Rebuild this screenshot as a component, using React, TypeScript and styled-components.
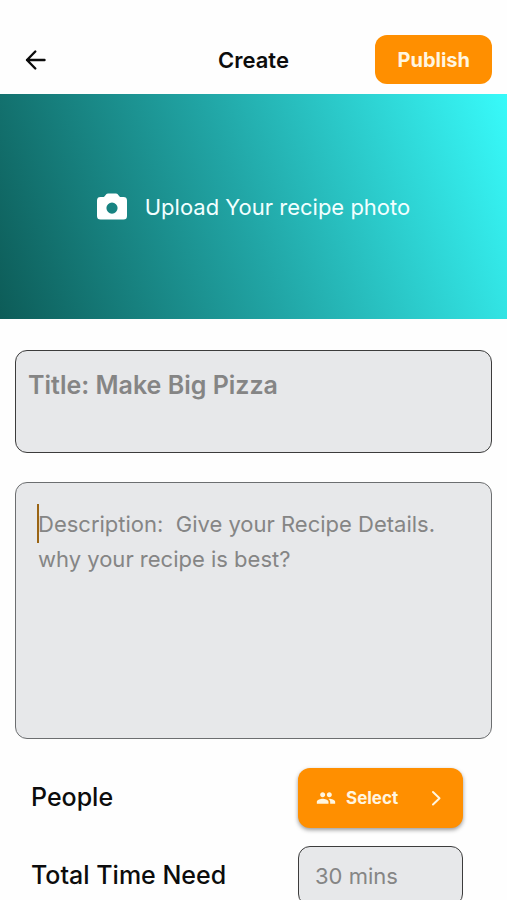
import React from "react";
import styled, { createGlobalStyle } from "styled-components";
import { MdPeople } from "react-icons/md";

const GlobalStyle = createGlobalStyle`
  *, *::before, *::after { box-sizing: border-box; }
  body {
    margin: 0;
    background: #fefefe;
    color: #0c0c0c;
    font-family: Inter, Roboto, "Liberation Sans", sans-serif;
  }
  button, input, textarea { font: inherit; color: inherit; }
`;

const Header = styled.header`
  display: grid;
  grid-template-columns: 1fr auto 1fr;
  align-items: center;
  padding: 35px 15px 10px;
`;

const BackButton = styled.button`
  display: flex;
  justify-self: start;
  padding: 0 8px;
  border: 0;
  background: none;
  cursor: pointer;
`;

const Title = styled.h1`
  margin: 0;
  font-size: 22px;
  font-weight: 600;
  line-height: 28px;
`;

const PublishButton = styled.button`
  justify-self: end;
  height: 49px;
  padding: 0 22px;
  border: 0;
  border-radius: 12px;
  background: #ff8f00;
  color: #fff6e0;
  font-size: 20px;
  font-weight: 700;
  cursor: pointer;
`;

const UploadBanner = styled.button`
  display: flex;
  align-items: center;
  justify-content: center;
  gap: 18px;
  width: 100%;
  height: 225px;
  padding: 0;
  border: 0;
  background: linear-gradient(70deg, #0d5c58 0%, #21a5a5 48%, #38fafa 100%);
  color: #f2ffff;
  font-size: 22px;
  cursor: pointer;
`;

const Form = styled.form`
  display: flex;
  flex-direction: column;
  gap: 29px;
  padding: 31px 15px 24px;
`;

const Field = styled.div`
  position: relative;
  display: flex;
`;

const TextArea = styled.textarea<{ $variant: "title" | "description" }>`
  width: 100%;
  height: ${(p) => (p.$variant === "title" ? 103 : 257)}px;
  padding: ${(p) => (p.$variant === "title" ? "17px 12px" : "24px 22px")};
  border: 1px solid ${(p) => (p.$variant === "title" ? "#3c3c3c" : "#6c6e70")};
  border-radius: 12px;
  outline: 0;
  resize: none;
  background: #e7e8ea;
  font-size: ${(p) => (p.$variant === "title" ? 25 : 22)}px;
  font-weight: ${(p) => (p.$variant === "title" ? 600 : 400)};
  line-height: 35px;
  &::placeholder { color: #858585; opacity: 1; }
`;

const Caret = styled.span`
  position: absolute;
  top: 22px;
  left: 22px;
  width: 2px;
  height: 39px;
  background: #9a6414;
`;

const Options = styled.div`
  display: flex;
  flex-direction: column;
  gap: 18px;
  padding: 0 29px 0 16px;
`;

const OptionRow = styled.div`
  display: flex;
  align-items: center;
  justify-content: space-between;
`;

const Label = styled.label`
  padding-bottom: 3px;
  font-size: 25px;
  font-weight: 500;
  line-height: 28px;
`;

const SelectButton = styled.button`
  display: flex;
  align-items: center;
  gap: 10px;
  width: 165px;
  height: 60px;
  padding: 0 18px;
  border: 0;
  border-radius: 12px;
  background: #ff8f00;
  box-shadow: 0 2px 4px rgba(0, 0, 0, 0.4);
  color: #fff6e0;
  font-size: 17px;
  font-weight: 700;
  cursor: pointer;
  svg:last-child { margin-left: auto; }
`;

const TimeInput = styled.input`
  width: 165px;
  height: 60px;
  padding: 0 16px;
  border: 1px solid #3c3c3c;
  border-radius: 12px;
  outline: 0;
  background: #e7e8ea;
  font-size: 22px;
  &::placeholder { color: #858585; opacity: 1; }
`;

const ArrowLeft = () => (
  <svg width="24" height="24" viewBox="0 0 24 24" fill="none" stroke="#0c0c0c" strokeWidth="2.4" strokeLinecap="round" strokeLinejoin="round" aria-hidden="true">
    <path d="M21.5 12H4M12.3 3.5L4 12l8.3 8.5" />
  </svg>
);

const Camera = () => (
  <svg width="30" height="28" viewBox="0 0 30 28" fill="#fff" aria-hidden="true">
    <path fillRule="evenodd" d="M11 .5h8c2.600 0 2.600 3.600 5 3.600h2.500A3.500 3.500 0 0 1 30 7.500V23a3.500 3.500 0 0 1-3.500 3.500h-23A3.500 3.500 0 0 1 0 23V7.500a3.500 3.500 0 0 1 3.500-3.400H6C8.400 4.100 8.400.5 11 .5zM15 9.500a5.600 5.600 0 1 0 0 11.200A5.600 5.600 0 0 0 15 9.500z" />
  </svg>
);

const ChevronRight = () => (
  <svg width="18" height="18" viewBox="0 0 18 18" fill="none" stroke="#fff6e0" strokeWidth="2" strokeLinecap="round" strokeLinejoin="round" aria-hidden="true">
    <path d="M6 3l6.500 6.200L6 15.500" />
  </svg>
);

export default function App() {
  return (
    <>
      <GlobalStyle />
      <Header>
        <BackButton type="button" aria-label="Back"><ArrowLeft /></BackButton>
        <Title>Create</Title>
        <PublishButton type="submit" form="recipe">Publish</PublishButton>
      </Header>
      <main>
        <UploadBanner type="button">
          <Camera />
          Upload Your recipe photo
        </UploadBanner>
        <Form id="recipe">
          <Field>
            <TextArea $variant="title" aria-label="Title" placeholder="Title: Make Big Pizza" />
          </Field>
          <Field>
            <TextArea
              $variant="description"
              aria-label="Description"
              placeholder={"Description:  Give your Recipe Details. why your recipe is best?"}
            />
            <Caret aria-hidden="true" />
          </Field>
          <Options>
            <OptionRow>
              <Label htmlFor="people">People</Label>
              <SelectButton id="people" type="button" aria-haspopup="listbox">
                <MdPeople size={20} aria-hidden="true" />
                Select
                <ChevronRight />
              </SelectButton>
            </OptionRow>
            <OptionRow>
              <Label htmlFor="time">Total Time Need</Label>
              <TimeInput id="time" type="text" placeholder="30 mins" />
            </OptionRow>
          </Options>
        </Form>
      </main>
    </>
  );
}
